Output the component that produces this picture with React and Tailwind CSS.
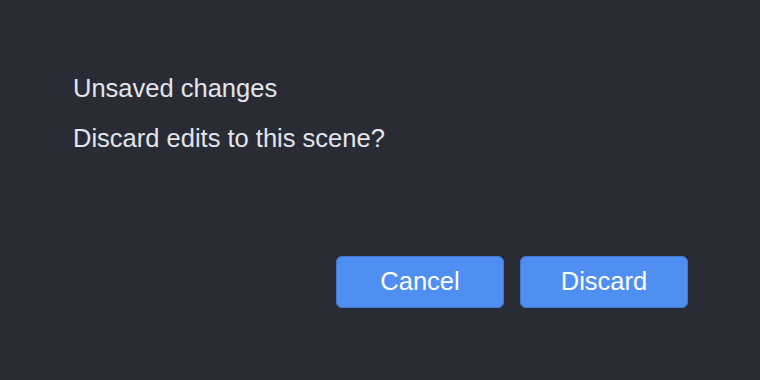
import React from "react";

export default function App() {
  return (
    <div
      className="w-[760px] h-[380px] bg-[#292c35] flex flex-col pl-[73px] pr-[72px] pt-[74px] pb-[72px]"
      style={{ fontFamily: '"Liberation Sans", Arial, sans-serif' }}
    >
      <div className="text-[25.5px] leading-[29px] text-[#e3e5ea]">Unsaved changes</div>
      <div className="mt-[21px] text-[25.5px] leading-[29px] text-[#e3e5ea]">Discard edits to this scene?</div>
      <div className="mt-auto flex justify-end gap-[16px]">
        <button className="w-[168px] h-[52px] rounded-[6px] bg-[#4f8ff2] border border-[#4479d0] text-white text-[25.5px] leading-none flex items-center justify-center">
          Cancel
        </button>
        <button className="w-[168px] h-[52px] rounded-[6px] bg-[#4f8ff2] border border-[#4479d0] text-white text-[25.5px] leading-none flex items-center justify-center">
          Discard
        </button>
      </div>
    </div>
  );
}
